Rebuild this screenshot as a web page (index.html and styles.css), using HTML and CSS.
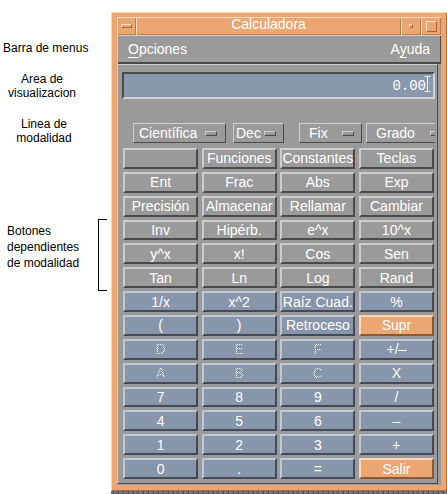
FILE: index.html
```html
<!DOCTYPE html>
<html lang="es">
<head>
<meta charset="utf-8">
<title>Calculadora</title>
<link rel="stylesheet" href="styles.css">
</head>
<body>
<div class="page">
  <aside class="notes">
    <p class="note note-menu">Barra de menus</p>
    <p class="note note-display">Area de<br>visualizacion</p>
    <p class="note note-mode">Linea de<br>modalidad</p>
    <div class="note-group">
      <p class="note note-keys">Botones<br>dependientes<br>de modalidad</p>
      <span class="bracket"></span>
    </div>
  </aside>

  <div class="desk">
    <div class="window">
      <div class="titlebar">
        <div class="tb tb-menu"><span class="tb-bar"></span></div>
        <div class="tb tb-title">Calculadora</div>
        <div class="tb tb-min"><span class="tb-dot"></span></div>
        <div class="tb tb-max"><span class="tb-box"></span></div>
      </div>
      <div class="client">
        <div class="menubar">
          <span class="menu"><span class="mn">O</span>pciones</span>
          <span class="menu">A<span class="mn">y</span>uda</span>
        </div>
        <div class="main">
          <div class="display">
            <span class="value">0.00</span>
            <svg class="caret" width="7" height="16" viewBox="0 0 7 16"><path d="M0.5 0.5H6.5M3.5 0.5V15.5M0.5 15.5H6.5" stroke="#f2f2f2" stroke-width="1" fill="none"/></svg>
          </div>
          <div class="modes">
            <div class="opt opt-mode"><span>Científica</span><span class="ind"></span></div>
            <div class="opt opt-base"><span>Dec</span><span class="ind"></span></div>
            <div class="opt opt-fix"><span>Fix</span><span class="ind"></span></div>
            <div class="opt opt-trig"><span>Grado</span><span class="ind"></span></div>
          </div>
          <div class="keys">
            <button class="key"></button>
            <button class="key">Funciones</button>
            <button class="key">Constantes</button>
            <button class="key">Teclas</button>

            <button class="key">Ent</button>
            <button class="key">Frac</button>
            <button class="key">Abs</button>
            <button class="key">Exp</button>

            <button class="key">Precisión</button>
            <button class="key">Almacenar</button>
            <button class="key">Rellamar</button>
            <button class="key">Cambiar</button>

            <button class="key">Inv</button>
            <button class="key">Hipérb.</button>
            <button class="key">e^x</button>
            <button class="key">10^x</button>

            <button class="key">y^x</button>
            <button class="key">x!</button>
            <button class="key">Cos</button>
            <button class="key">Sen</button>

            <button class="key">Tan</button>
            <button class="key">Ln</button>
            <button class="key">Log</button>
            <button class="key">Rand</button>

            <button class="key blue">1/x</button>
            <button class="key blue">x^2</button>
            <button class="key blue">Raíz Cuad.</button>
            <button class="key blue">%</button>

            <button class="key blue">(</button>
            <button class="key blue">)</button>
            <button class="key blue">Retroceso</button>
            <button class="key warm">Supr</button>

            <button class="key blue"><span class="off">D</span></button>
            <button class="key blue"><span class="off">E</span></button>
            <button class="key blue"><span class="off">F</span></button>
            <button class="key blue">+/–</button>

            <button class="key blue"><span class="off">A</span></button>
            <button class="key blue"><span class="off">B</span></button>
            <button class="key blue"><span class="off">C</span></button>
            <button class="key blue">X</button>

            <button class="key blue">7</button>
            <button class="key blue">8</button>
            <button class="key blue">9</button>
            <button class="key blue">/</button>

            <button class="key blue">4</button>
            <button class="key blue">5</button>
            <button class="key blue">6</button>
            <button class="key blue">–</button>

            <button class="key blue">1</button>
            <button class="key blue">2</button>
            <button class="key blue">3</button>
            <button class="key blue">+</button>

            <button class="key blue">0</button>
            <button class="key blue">.</button>
            <button class="key blue">=</button>
            <button class="key warm">Salir</button>
          </div>
        </div>
      </div>
    </div>
    <div class="ground"></div>
  </div>
</div>
</body>
</html>
```

FILE: styles.css
```css
* { box-sizing: border-box; }

html, body {
  margin: 0;
  padding: 0;
  background: #ffffff;
}

body {
  width: 447px;
  height: 494px;
  overflow: hidden;
  font-family: "Liberation Sans", Arial, sans-serif;
}

.page {
  display: flex;
  align-items: flex-start;
}

/* ---------- annotations ---------- */
.notes {
  width: 111px;
  flex: none;
  display: flex;
  flex-direction: column;
  color: #000;
  font-size: 12px;
}

.note { margin: 0; }

.note-menu {
  margin-top: 41px;
  padding-left: 3px;
  line-height: 14px;
}

.note-display {
  margin-top: 17px;
  width: 84px;
  text-align: center;
  line-height: 14px;
}

.note-mode {
  margin-top: 17px;
  width: 88px;
  text-align: center;
  line-height: 14px;
}

.note-group {
  margin-top: 74px;
  width: 107px;
  height: 72px;
  display: flex;
  justify-content: space-between;
}

.note-keys {
  padding-left: 7px;
  padding-top: 4px;
  line-height: 16px;
}

.bracket {
  width: 9px;
  height: 72px;
  border: 1px solid #000;
  border-right: none;
}

/* ---------- window frame ---------- */
.desk {
  margin-top: 12px;
  width: 336px;
  flex: none;
}

.window {
  height: 479px;
  padding: 5px 6px 6px 6px;
  background: #eca672;
  box-shadow: inset 1px 1px 0 #f9d8ba, inset -1px -1px 0 #a66f45;
  position: relative;
}

.ground {
  height: 3px;
  background: repeating-linear-gradient(90deg, #6b6b6b 0 2px, #4a4a4a 2px 3px, #7a7a7a 3px 5px);
}

.titlebar {
  height: 18px;
  display: flex;
}

.tb {
  height: 18px;
  background: #eca672;
  box-shadow: inset 1px 1px 0 #fbdcc0, inset -1px -1px 0 #b97d4f;
  display: flex;
  align-items: center;
  justify-content: center;
}

.tb-menu { width: 19px; }
.tb-min  { width: 20px; }
.tb-max  { width: 20px; }

.tb-title {
  flex: 1;
  color: #ffffff;
  font-size: 14px;
  line-height: 15px;
  align-items: flex-start;
}

.tb-bar {
  width: 11px;
  height: 4px;
  border-top: 1px solid #fbe0c6;
  border-left: 1px solid #fbe0c6;
  border-bottom: 1px solid #9c6a43;
  border-right: 1px solid #9c6a43;
}

.tb-dot {
  width: 4px;
  height: 4px;
  border-top: 1px solid #fbe0c6;
  border-left: 1px solid #fbe0c6;
  border-bottom: 1px solid #9c6a43;
  border-right: 1px solid #9c6a43;
}

.tb-box {
  width: 11px;
  height: 11px;
  border-top: 1px solid #fbe0c6;
  border-left: 1px solid #fbe0c6;
  border-bottom: 1px solid #9c6a43;
  border-right: 1px solid #9c6a43;
}

/* ---------- client area ---------- */
.client {
  height: 450px;
  background: #9a9a9a;
  display: flex;
  flex-direction: column;
}

.menubar {
  height: 29px;
  flex: none;
  display: flex;
  justify-content: space-between;
  align-items: center;
  padding: 0 11px;
  color: #ffffff;
  font-size: 14px;
  line-height: 29px;
  box-shadow: inset 1px 1px 0 #cfcfcf, inset -1px -2px 0 #4a4a4a;
}

.mn {
  text-decoration: underline;
  text-underline-offset: 3px;
  text-decoration-thickness: 1px;
}

.main {
  height: 420px;
  flex: none;
  margin-right: 3px;
  border: 1px solid;
  border-color: #cfcfcf #4a4a4a #4a4a4a #cfcfcf;
  padding: 7px 2px 4px 4px;
  display: flex;
  flex-direction: column;
}

.display {
  height: 27px;
  flex: none;
  position: relative;
  border: 2px solid;
  border-color: #4a4a4a #d2d2d2 #d2d2d2 #4a4a4a;
  background: #8998ad;
  display: flex;
  justify-content: flex-end;
  align-items: center;
  padding-right: 7px;
  color: #ffffff;
  font-family: "Liberation Mono", "DejaVu Sans Mono", monospace;
  font-size: 14px;
}

.caret {
  position: absolute;
  right: 2px;
  top: 2px;
}

/* ---------- mode line ---------- */
.modes {
  margin-top: 24px;
  height: 20px;
  flex: none;
  display: flex;
  overflow: hidden;
  padding-left: 11px;
}

.opt {
  flex: none;
  height: 20px;
  display: flex;
  align-items: center;
  justify-content: space-between;
  border: 1px solid;
  border-color: #cfcfcf #4a4a4a #4a4a4a #cfcfcf;
  color: #ffffff;
  font-size: 14px;
}

.opt-mode { width: 93px; padding: 0 8px 0 5px; }
.opt-base { width: 51px; margin-left: 7px; padding: 0 7px 0 2px; }
.opt-fix  { width: 63px; margin-left: 15px; padding: 0 7px 0 9px; }
.opt-trig { width: 84px; margin-left: 4px; padding: 0 7px 0 9px; }

.ind {
  width: 12px;
  height: 5px;
  border: 1px solid;
  border-color: #cfcfcf #4a4a4a #4a4a4a #cfcfcf;
}

/* ---------- keypad ---------- */
.keys {
  margin: 5px 1px 0 1px;
  height: 331px;
  flex: none;
  display: grid;
  grid-template-columns: repeat(4, 1fr);
  grid-template-rows: repeat(14, 1fr);
  column-gap: 3.5px;
  row-gap: 3px;
}

.key {
  margin: 0;
  padding: 0;
  min-width: 0;
  border: 2px solid;
  border-color: #cdcdcd #4a4a4a #4a4a4a #cdcdcd;
  background: #9a9a9a;
  color: #ffffff;
  font-family: "Liberation Sans", Arial, sans-serif;
  font-size: 14px;
  line-height: 16px;
  white-space: nowrap;
  overflow: hidden;
  display: flex;
  align-items: center;
  justify-content: center;
}

.key.blue {
  background: #8796aa;
  border-color: #bfc8d4 #434a55 #434a55 #bfc8d4;
}

.key.warm {
  background: #eca672;
  border-color: #f9d8bb #8a5a36 #8a5a36 #f9d8bb;
}

.off {
  color: transparent;
  background-image: repeating-conic-gradient(#ffffff 0 25%, transparent 0 50%);
  background-size: 2px 2px;
  -webkit-background-clip: text;
  background-clip: text;
}
```
